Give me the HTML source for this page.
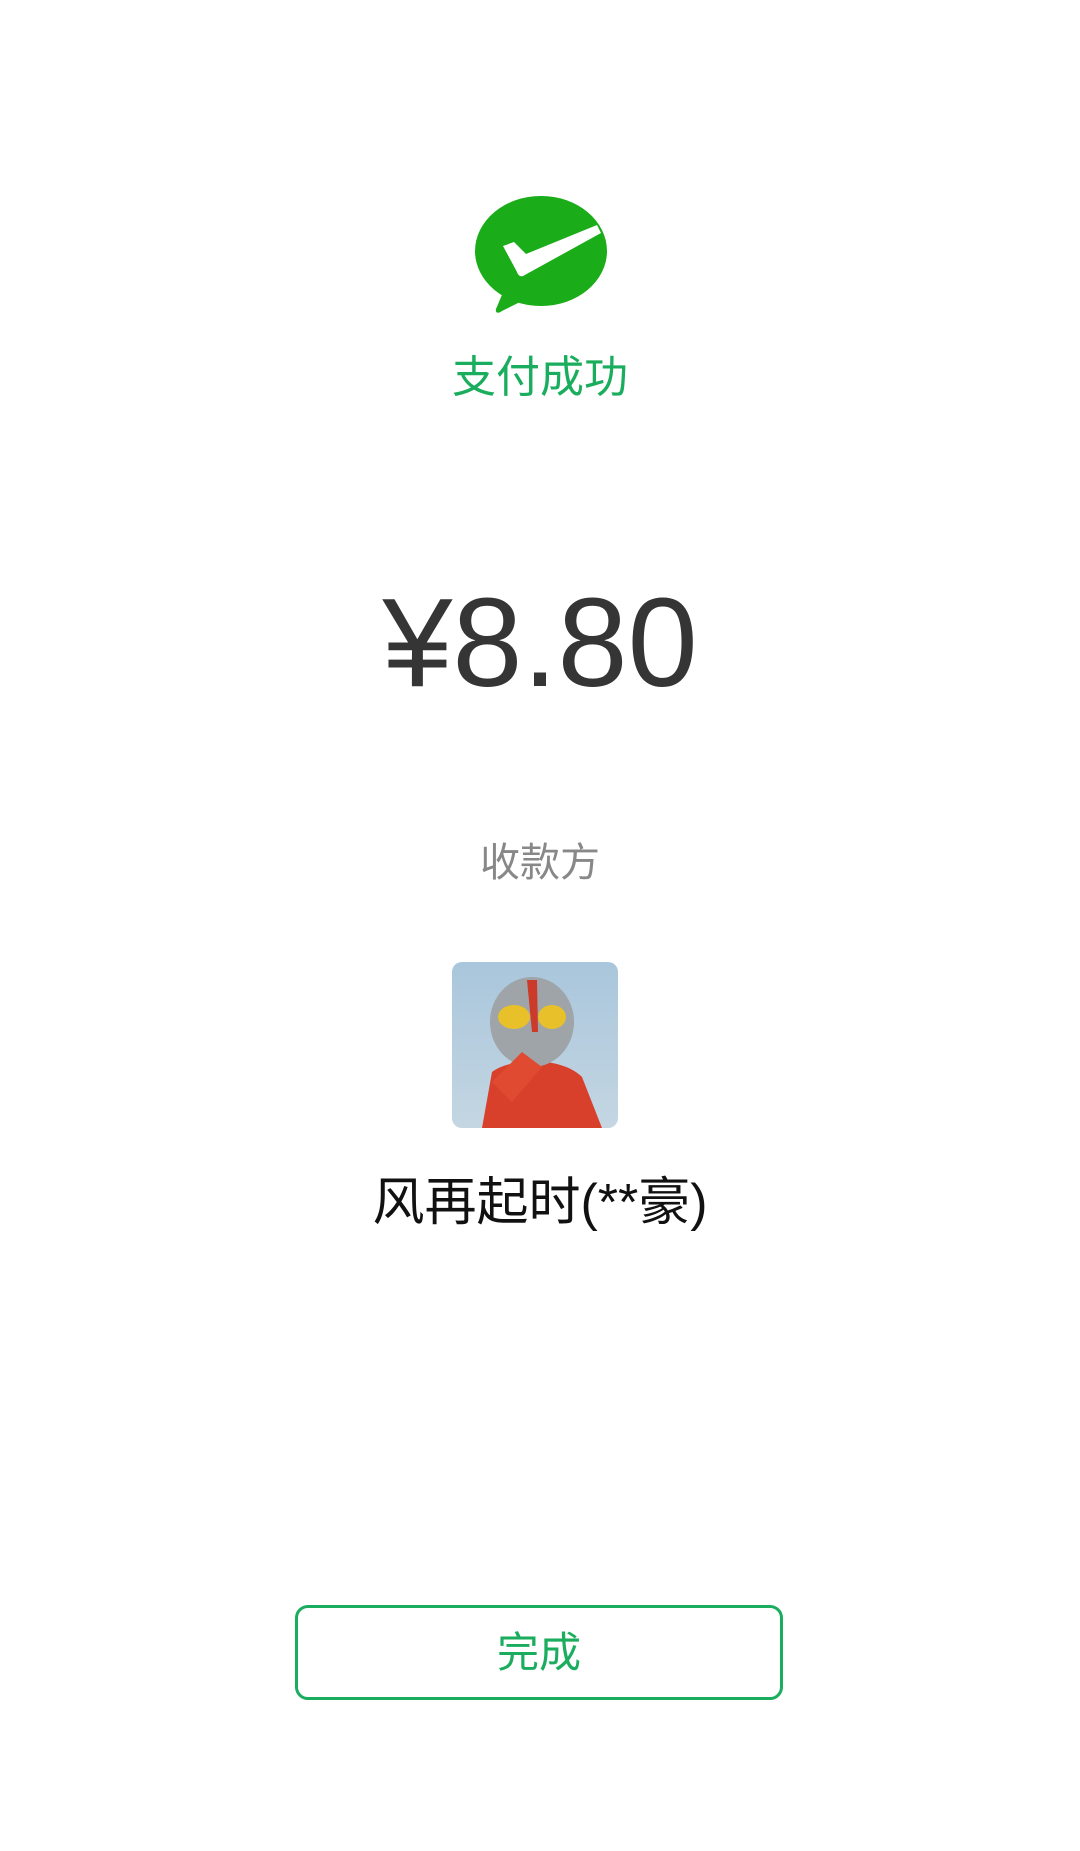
<!DOCTYPE html>
<html><head><meta charset="utf-8"><style>
html,body{margin:0;padding:0;background:#fff;}
body{width:1080px;height:1851px;position:relative;overflow:hidden;font-family:"Liberation Sans","Noto Sans CJK SC",sans-serif;}
.abs{position:absolute;left:0;width:1080px;text-align:center;white-space:nowrap;}
</style></head><body>
<svg style="position:absolute;left:0;top:0" width="1080" height="330" viewBox="0 0 1080 330">
<ellipse cx="541" cy="251" rx="66" ry="55" fill="#1aad19"/>
<path d="M504 290 L496 309 C495 313 498 314 502 311 L526 299 Z" fill="#1aad19"/>
<path d="M503 246 L514 242 L526 254 L597 225 L601 233 L523 276 C520 277 518 275 517 272 Z" fill="#fff"/>
</svg>
<div class="abs" style="top:353px;font-size:44px;color:#1aad5e;line-height:50px;">支付成功</div>
<div class="abs" style="top:573px;font-size:126px;color:#353535;line-height:140px;">¥8.80</div>
<div class="abs" style="top:840px;font-size:40px;color:#888;line-height:46px;">收款方</div>
<div style="position:absolute;left:452px;top:962px;width:166px;height:166px;border-radius:10px;overflow:hidden;background:linear-gradient(#a9c6dc,#c4d6e2);">
<svg width="166" height="166" viewBox="0 0 166 166">
<path d="M30 166 L40 110 C60 95 110 95 130 115 L150 166Z" fill="#d8402c"/>
<ellipse cx="80" cy="60" rx="42" ry="45" fill="#9ea4a8"/>
<path d="M75 18 L85 18 L86 70 L80 70Z" fill="#cc3a2a"/>
<ellipse cx="62" cy="55" rx="16" ry="12" fill="#e8c02a"/>
<ellipse cx="100" cy="55" rx="14" ry="12" fill="#e8c02a"/>
<path d="M40 120 L70 90 L90 105 L60 140Z" fill="#e04a30"/>
</svg></div>
<div class="abs" style="top:1172px;font-size:52px;color:#111;line-height:62px;">风再起时(**豪)</div>
<div style="position:absolute;left:295px;top:1605px;width:482px;height:89px;border:3px solid #1aad5e;border-radius:13px;text-align:center;line-height:89px;font-size:42px;color:#1aad5e;">完成</div>
</body></html>
